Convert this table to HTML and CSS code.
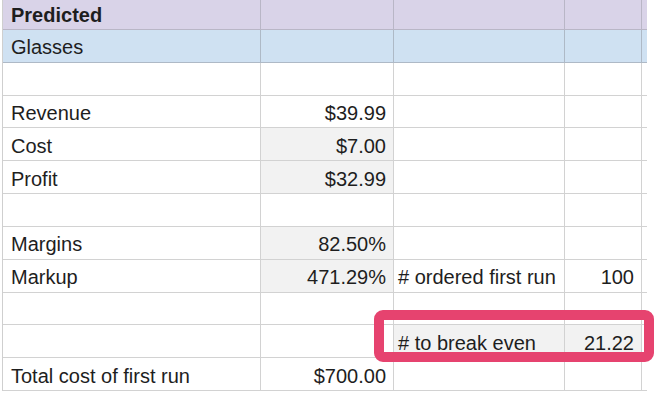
FILE: index.html
```html
<!DOCTYPE html>
<html>
<head>
<meta charset="utf-8">
<link rel="stylesheet" href="styles.css">
</head>
<body>
<div class="sheet">
  <div class="grid">
    <div class="c head l b">Predicted</div><div class="c head"></div><div class="c head"></div><div class="c head"></div><div class="c head e"></div>
    <div class="c blue l">Glasses</div><div class="c blue"></div><div class="c blue"></div><div class="c blue"></div><div class="c blue e"></div>
    <div class="c"></div><div class="c"></div><div class="c"></div><div class="c"></div><div class="c e"></div>
    <div class="c l">Revenue</div><div class="c r">$39.99</div><div class="c"></div><div class="c"></div><div class="c e"></div>
    <div class="c l">Cost</div><div class="c r g">$7.00</div><div class="c"></div><div class="c"></div><div class="c e"></div>
    <div class="c l">Profit</div><div class="c r g">$32.99</div><div class="c"></div><div class="c"></div><div class="c e"></div>
    <div class="c"></div><div class="c"></div><div class="c"></div><div class="c"></div><div class="c e"></div>
    <div class="c l">Margins</div><div class="c r g">82.50%</div><div class="c"></div><div class="c"></div><div class="c e"></div>
    <div class="c l">Markup</div><div class="c r g">471.29%</div><div class="c s">#&nbsp;ordered first run</div><div class="c r">100</div><div class="c e"></div>
    <div class="c"></div><div class="c"></div><div class="c"></div><div class="c"></div><div class="c e"></div>
    <div class="c"></div><div class="c"></div><div class="c s g">#&nbsp;to break even</div><div class="c r g">21.22</div><div class="c e"></div>
    <div class="c l">Total cost of first run</div><div class="c r">$700.00</div><div class="c"></div><div class="c"></div><div class="c e"></div>
  </div>
  <div class="highlight"></div>
</div>
</body>
</html>
```
FILE: styles.css
```css
html, body {
  margin: 0;
  padding: 0;
  background: #ffffff;
}
body {
  width: 660px;
  height: 406px;
  overflow: hidden;
  font-family: "Liberation Sans", Arial, sans-serif;
  font-size: 20px;
  color: #1e1e1e;
}
.sheet {
  position: relative;
  width: 660px;
  height: 406px;
}
.grid {
  display: grid;
  grid-template-columns: 258px 133px 171px 77px 5px;
  grid-auto-rows: 32.85px;
  margin-top: -3px;
  margin-left: 2px;
  width: 645px;
  border-left: 1px solid #cfcfcf;
}
.c {
  box-sizing: border-box;
  border-right: 1px solid #d2d2d2;
  border-bottom: 1px solid #d2d2d2;
  display: flex;
  align-items: center;
  padding-top: 4px;
  white-space: nowrap;
  background: #ffffff;
}
.c.e {
  border-right: none;
}
.l {
  padding-left: 8px;
}
.s {
  padding-left: 4px;
}
.r {
  justify-content: flex-end;
  padding-right: 7px;
}
.b {
  font-weight: bold;
}
.g {
  background: #f2f2f2;
}
.head {
  background: #d9d3e8;
  border-color: #b9b6c6;
  padding-top: 5px;
}
.blue {
  background: #cfe1f2;
  border-color: #aeb9c6;
}
.highlight {
  position: absolute;
  left: 374px;
  top: 313px;
  width: 280px;
  height: 52px;
  box-sizing: border-box;
  border: 10px solid #e6436f;
  border-radius: 9px;
}
```
